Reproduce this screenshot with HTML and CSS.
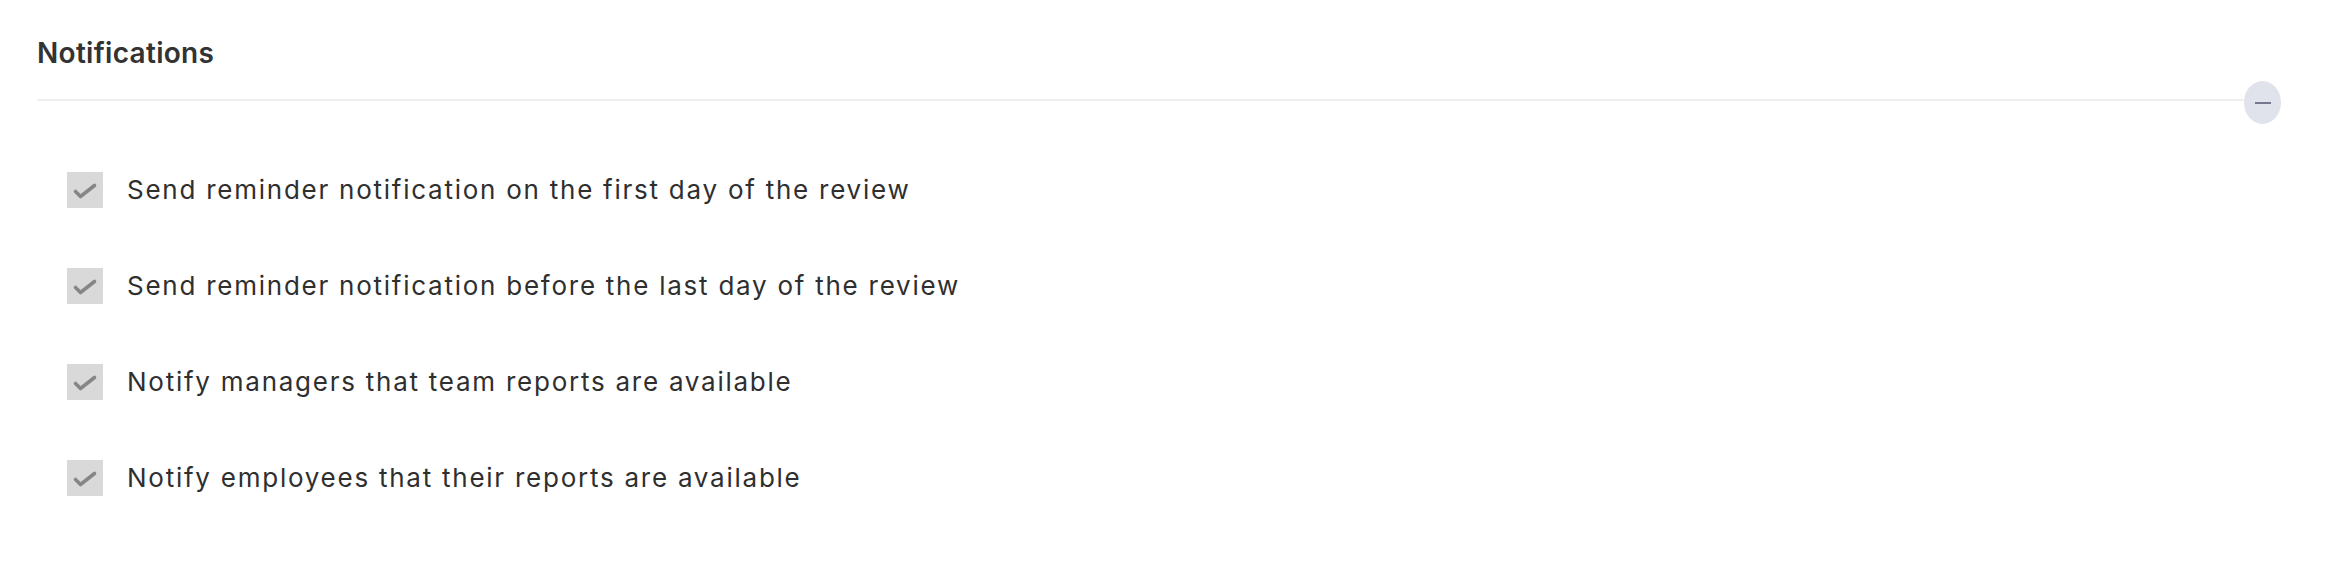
FILE: index.html
```html
<!DOCTYPE html>
<html lang="en">
<head>
<meta charset="utf-8">
<title>Notifications</title>
<link rel="stylesheet" href="styles.css">
</head>
<body>
<section class="section">
  <h2 class="title">Notifications</h2>
  <div class="rule-row">
    <div class="rule"></div>
    <button class="collapse" type="button" aria-label="Collapse"><span class="minus"></span></button>
  </div>
  <ul class="options">
    <li class="option">
      <span class="box"><svg width="36" height="36" viewBox="0 0 36 36"><polyline points="8.5,19.5 13.5,24.5 27.5,13.5" fill="none" stroke="#868686" stroke-width="3.6" stroke-linecap="round" stroke-linejoin="round"/></svg></span>
      <span class="label">Send reminder notification on the first day of the review</span>
    </li>
    <li class="option">
      <span class="box"><svg width="36" height="36" viewBox="0 0 36 36"><polyline points="8.5,19.5 13.5,24.5 27.5,13.5" fill="none" stroke="#868686" stroke-width="3.6" stroke-linecap="round" stroke-linejoin="round"/></svg></span>
      <span class="label">Send reminder notification before the last day of the review</span>
    </li>
    <li class="option">
      <span class="box"><svg width="36" height="36" viewBox="0 0 36 36"><polyline points="8.5,19.5 13.5,24.5 27.5,13.5" fill="none" stroke="#868686" stroke-width="3.6" stroke-linecap="round" stroke-linejoin="round"/></svg></span>
      <span class="label">Notify managers that team reports are available</span>
    </li>
    <li class="option">
      <span class="box"><svg width="36" height="36" viewBox="0 0 36 36"><polyline points="8.5,19.5 13.5,24.5 27.5,13.5" fill="none" stroke="#868686" stroke-width="3.6" stroke-linecap="round" stroke-linejoin="round"/></svg></span>
      <span class="label">Notify employees that their reports are available</span>
    </li>
  </ul>
</section>
</body>
</html>
```

FILE: styles.css
```css
html, body {
  margin: 0;
  padding: 0;
  background: #ffffff;
}

body {
  font-family: Inter, "Noto Sans", "DejaVu Sans", sans-serif;
  color: #2f2f2f;
}

.section {
  padding: 33px 49px 0 37px;
}

.title {
  margin: 0;
  font-size: 28px;
  line-height: 40px;
  font-weight: 600;
  color: #333333;
  letter-spacing: 0.3px;
}

.rule-row {
  display: flex;
  align-items: center;
  margin-top: 8px;
}

.rule {
  flex: 1;
  height: 2px;
  background: #efefef;
  margin-bottom: 5px;
}

.collapse {
  width: 37px;
  height: 43px;
  border: 0;
  padding: 0;
  border-radius: 50%;
  background: #e1e3ec;
  display: flex;
  align-items: center;
  justify-content: center;
}

.minus {
  display: block;
  width: 16px;
  height: 2px;
  background: #76778f;
}

.options {
  list-style: none;
  margin: 48px 0 0 0;
  padding: 0 0 0 30px;
  display: flex;
  flex-direction: column;
  gap: 60px;
}

.option {
  display: flex;
  align-items: center;
  gap: 24px;
  height: 36px;
}

.box {
  width: 36px;
  height: 36px;
  background: #d9d9d9;
  display: block;
  flex: none;
}

.box svg {
  display: block;
}

.label {
  font-size: 26px;
  line-height: 36px;
  color: #2f2f2f;
  letter-spacing: 1.75px;
}
```
